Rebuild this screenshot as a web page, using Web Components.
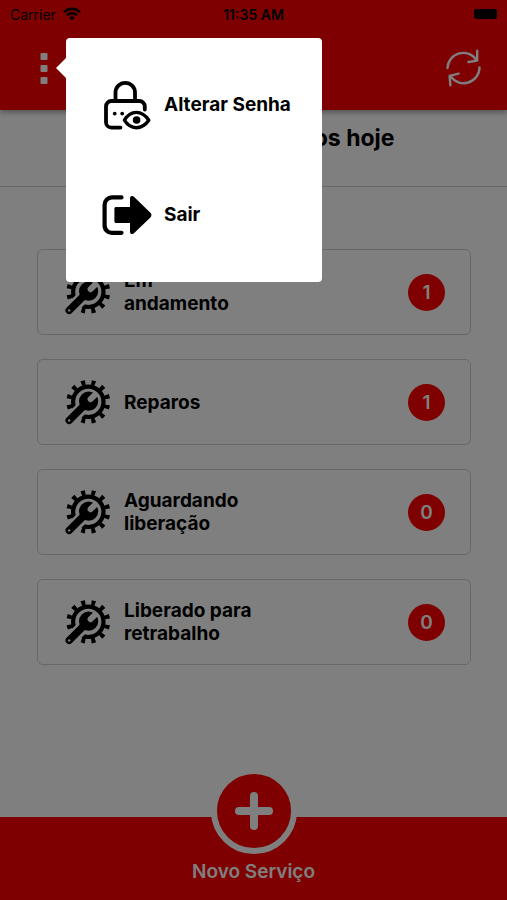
<!DOCTYPE html>
<html lang="pt-BR">
<head>
<meta charset="utf-8">
<meta name="viewport" content="width=device-width, initial-scale=1">
<title>Serviços</title>
<style>
    body{
        margin: 0;
        background: #fff;
        color: #000;
        font-family: Inter, "Liberation Sans", sans-serif;
    }
</style>
</head>
<body>
<servicos-app></servicos-app>

<script>
/** Barra de estado del dispositivo. */
class StatusBar extends HTMLElement{

    constructor(){
        super();
        this.attachShadow({mode: 'open'});
    }

    connectedCallback() {
        this.render();
    }

    /** Define y renderiza en pantalla el elemento. */
    render(){
        const style = `
            <style>
                :host{
                    display: grid;
                    grid-template-columns: 1fr auto 1fr;
                    align-items: center;
                    height: 28px;
                    padding: 0 10px;
                    font-size: 14px;
                }
                .carrier{display: flex; align-items: center; gap: 7px;}
                .time{font-weight: 600;}
                .battery{justify-self: end; width: 23px; height: 10px; border-radius: 2px; background: #000;}
                svg{display: block;}
            </style>
        `;
        const body = `
            <div class="carrier">
                <span>Carrier</span>
                <svg width="18" height="14" viewBox="0 0 18 14" fill="none" stroke="#000" stroke-width="2.6" aria-hidden="true">
                    <path d="M1 5.2C5.6 .6 12.4 .6 17 5.2"/>
                    <path d="M4 8.4C7 5.6 11 5.6 14 8.4"/>
                    <path d="M9 13.4L6.2 10.6C7.8 9.2 10.2 9.2 11.8 10.6Z" fill="#000" stroke="none"/>
                </svg>
            </div>
            <span class="time">11:35 AM</span>
            <div class="battery"></div>
        `;
        this.shadowRoot.innerHTML = style + body;
    }
}

customElements.define('status-bar', StatusBar);


/** Encabezado con el botón del menú y el de actualizar. */
class AppHeader extends HTMLElement{

    constructor(){
        super();
        this.attachShadow({mode: 'open'});
    }

    connectedCallback() {
        this.render();
        this.setEventListeners();
    }

    /** Gestiona los eventos a los que este elemento esta suscripto. */
    handleEvent(e){
        this.dispatchEvent(new CustomEvent('menu-toggle', {bubbles: true, composed: true}));
    }

    /** Define y renderiza en pantalla el elemento. */
    render(){
        const style = `
            <style>
                :host{
                    display: block;
                    background: #f00;
                    box-shadow: 0 2px 6px rgba(0, 0, 0, .4);
                }
                .toolbar{
                    display: flex;
                    align-items: center;
                    justify-content: space-between;
                    height: 82px;
                    padding: 0 24px;
                }
                button{
                    display: grid;
                    place-items: center;
                    width: 40px;
                    height: 40px;
                    padding: 0;
                    border: 0;
                    background: none;
                    cursor: pointer;
                }
            </style>
        `;
        const body = `
            <status-bar></status-bar>
            <div class="toolbar">
                <button id="menu" aria-label="Menu">
                    <svg width="8" height="34" viewBox="0 0 8 34" fill="#fff">
                        <rect x=".5" y="1" width="7" height="7" rx="1"/>
                        <rect x=".5" y="13" width="7" height="7" rx="1"/>
                        <rect x=".5" y="25" width="7" height="7" rx="1"/>
                    </svg>
                </button>
                <button aria-label="Atualizar">
                    <svg width="40" height="40" viewBox="0 0 40 40" fill="none" stroke="#fff" stroke-width="2.4" stroke-linecap="round" stroke-linejoin="round">
                        <path d="M4.5 19A15.8 15.8 0 0 1 33.6 11.2"/>
                        <path d="M34.2 1.8V11.6L25.4 13"/>
                        <path d="M36.5 18.4A15.8 15.8 0 0 1 7.6 27.2"/>
                        <path d="M7.4 36.4L6.6 26.8L15.6 24.6"/>
                    </svg>
                </button>
            </div>
        `;
        this.shadowRoot.innerHTML = style + body;
    }

    /** Suscribe el elemento a todos los eventos que debe escuchar. */
    setEventListeners(){
        this.shadowRoot.getElementById('menu').addEventListener('click', this);
    }
}

customElements.define('app-header', AppHeader);


/** Tarjeta con el estado de los servicios y su cantidad. */
class ServicoCard extends HTMLElement{

    constructor(){
        super();
        this.attachShadow({mode: 'open'});
    }

    connectedCallback() {
        this.render();
    }

    static get observedAttributes() {
        return ['total'];
    }

    attributeChangedCallback() {
        if(this.isConnected) this.render();
    }

    /** Define y renderiza en pantalla el elemento. */
    render(){
        const style = `
            <style>
                :host{display: block;}
                button{
                    display: flex;
                    align-items: center;
                    box-sizing: border-box;
                    width: 100%;
                    min-height: 86px;
                    padding: 0 25px 0 27px;
                    border: 1px solid #d0d0d0;
                    border-radius: 6px;
                    background: #fff;
                    color: #000;
                    font: 700 19px/23px Inter, "Liberation Sans", sans-serif;
                    text-align: left;
                    cursor: pointer;
                }
                svg{flex: none; margin-right: 13px;}
                .label{max-width: 136px;}
                .total{
                    flex: none;
                    width: 37px;
                    margin-left: auto;
                    border-radius: 50%;
                    background: #f00;
                    color: #fff;
                    font-weight: 600;
                    line-height: 37px;
                    text-align: center;
                }
            </style>
        `;
        const body = `
            <button>
                <svg width="46" height="46" viewBox="0 0 46 46" aria-hidden="true">
                    <mask id="corte" maskUnits="userSpaceOnUse" x="0" y="0" width="46" height="46">
                        <rect width="46" height="46" fill="#fff"/>
                        <path d="M0 46L20 26" stroke="#000" stroke-width="13"/>
                    </mask>
                    <mask id="boca" maskUnits="userSpaceOnUse" x="0" y="0" width="46" height="46">
                        <rect width="46" height="46" fill="#fff"/>
                        <path d="M25.6 20.2L36 9.8" stroke="#000" stroke-width="6" stroke-linecap="round"/>
                        <circle cx="4.2" cy="41.4" r="1.2" fill="#000"/>
                    </mask>
                    <g mask="url(#corte)" fill="none" stroke="#000">
                        <circle cx="23.3" cy="22.8" r="15.2" stroke-width="4.2"/>
                        <circle cx="23.3" cy="22.8" r="19.2" stroke-width="5.4" pathLength="120" stroke-dasharray="4 6" stroke-dashoffset="2" transform="rotate(15 23.3 22.8)"/>
                    </g>
                    <g mask="url(#boca)">
                        <circle cx="23.6" cy="22.2" r="9.6"/>
                        <path d="M4.2 41.4L20 25.6" stroke="#000" stroke-width="7.4" stroke-linecap="round"/>
                    </g>
                </svg>
                <span class="label"><slot></slot></span>
                <span class="total">${this.getAttribute('total')}</span>
            </button>
        `;
        this.shadowRoot.innerHTML = style + body;
    }
}

customElements.define('servico-card', ServicoCard);


/** Pie con el botón para crear un nuevo servicio. */
class NovoServico extends HTMLElement{

    constructor(){
        super();
        this.attachShadow({mode: 'open'});
    }

    connectedCallback() {
        this.render();
    }

    /** Define y renderiza en pantalla el elemento. */
    render(){
        const style = `
            <style>
                :host{display: flex; justify-content: center; height: 83px; background: #f00;}
                button{
                    display: flex;
                    flex-direction: column;
                    align-items: center;
                    gap: 6px;
                    margin-top: -49px;
                    padding: 0;
                    border: 0;
                    background: none;
                    color: #fff;
                    font: 600 19px/24px Inter, "Liberation Sans", sans-serif;
                    cursor: pointer;
                }
                .circle{
                    display: grid;
                    place-items: center;
                    width: 74px;
                    height: 74px;
                    border: 6px solid #fff;
                    border-radius: 50%;
                    background: #f00;
                }
            </style>
        `;
        const body = `
            <button>
                <span class="circle">
                    <svg width="40" height="40" viewBox="0 0 40 40" stroke="#fff" stroke-width="8" stroke-linecap="round" aria-hidden="true">
                        <path d="M20 5V35M5 20H35"/>
                    </svg>
                </span>
                <span>Novo Serviço</span>
            </button>
        `;
        this.shadowRoot.innerHTML = style + body;
    }
}

customElements.define('novo-servico', NovoServico);


/** Menú flotante con las opciones de la cuenta. */
class MenuPopover extends HTMLElement{

    constructor(){
        super();
        this.attachShadow({mode: 'open'});
    }

    connectedCallback() {
        this.render();
        this.setEventListeners();
    }

    /** Cierra el menú al tocar el fondo. */
    handleEvent(e){
        this.hidden = true;
    }

    /** Define y renderiza en pantalla el elemento. */
    render(){
        const style = `
            <style>
                :host{position: absolute; inset: 0; z-index: 10;}
                :host([hidden]){display: none;}
                #backdrop{position: absolute; inset: 0; background: rgba(0, 0, 0, .5);}
                nav{
                    position: absolute;
                    top: 38px;
                    left: 66px;
                    display: flex;
                    flex-direction: column;
                    gap: 50px;
                    box-sizing: border-box;
                    width: 256px;
                    padding: 37px 28px 37px 36px;
                    border-radius: 4px;
                    background: #fff;
                }
                nav::before{
                    content: "";
                    position: absolute;
                    top: 20px;
                    left: -10px;
                    border: solid transparent;
                    border-width: 10px 10px 10px 0;
                    border-right-color: #fff;
                }
                button{
                    display: flex;
                    align-items: center;
                    gap: 12px;
                    height: 60px;
                    padding: 0;
                    border: 0;
                    background: none;
                    color: #000;
                    font: 700 19px/24px Inter, "Liberation Sans", sans-serif;
                    white-space: nowrap;
                    cursor: pointer;
                }
                svg{flex: none;}
            </style>
        `;
        const body = `
            <div id="backdrop"></div>
            <nav>
                <button>
                    <svg width="50" height="50" viewBox="0 0 50 50" fill="none" stroke="#000" stroke-width="3.8" stroke-linecap="round" aria-hidden="true">
                        <path d="M13.5 20V12.6A9.7 9.7 0 0 1 33 12.6V20"/>
                        <path d="M18.5 47.6H9.4A5.4 5.4 0 0 1 4 42.2V26.4A5.4 5.4 0 0 1 9.4 21H37.4A5.4 5.4 0 0 1 42.8 26.4V29.6"/>
                        <path d="M22.4 40.2C28.6 29.8 39.8 29.8 46.8 40.2C39.8 50.2 28.6 50.2 22.4 40.2Z" stroke-width="3.4" stroke-linejoin="round"/>
                        <circle cx="34.6" cy="40" r="3.8" fill="#000" stroke="none"/>
                        <circle cx="12.7" cy="33.6" r="1.9" fill="#000" stroke="none"/>
                        <circle cx="20.2" cy="33.6" r="1.9" fill="#000" stroke="none"/>
                    </svg>
                    Alterar Senha
                </button>
                <button>
                    <svg width="50" height="50" viewBox="0 0 50 50" aria-hidden="true">
                        <path d="M19.5 7.4H10.4A7.4 7.4 0 0 0 2.6 15V35A7.4 7.4 0 0 0 10.4 42.8H19.5" fill="none" stroke="#000" stroke-width="4.2" stroke-linecap="round"/>
                        <path d="M14.4 17H28V8.6C28 5.8 30.4 5.4 32.2 7L48.4 22.8C49.8 24.2 49.8 26 48.4 27.4L32.2 43C30.4 44.6 28 44.2 28 41.4V33H14.4C13 33 12.4 32.4 12.4 31V19C12.4 17.6 13 17 14.4 17Z"/>
                    </svg>
                    Sair
                </button>
            </nav>
        `;
        this.shadowRoot.innerHTML = style + body;
    }

    /** Suscribe el elemento a todos los eventos que debe escuchar. */
    setEventListeners(){
        this.shadowRoot.getElementById('backdrop').addEventListener('click', this);
    }
}

customElements.define('menu-popover', MenuPopover);


/** Pantalla principal. */
class ServicosApp extends HTMLElement{

    constructor(){
        super();
        this.attachShadow({mode: 'open'});
    }

    connectedCallback() {
        this.render();
        this.setEventListeners();
    }

    /** Muestra u oculta el menú. */
    handleEvent(e){
        const menu = this.shadowRoot.querySelector('menu-popover');
        menu.hidden = !menu.hidden;
    }

    /** Define y renderiza en pantalla el elemento. */
    render(){
        const style = `
            <style>
                :host{
                    position: relative;
                    display: flex;
                    flex-direction: column;
                    min-height: 100vh;
                }
                h1{
                    margin: 0;
                    padding: 14px 16px 34px;
                    border-bottom: 1px solid #d0d0d0;
                    font-size: 23px;
                    font-weight: 700;
                    line-height: 28px;
                    text-align: center;
                }
                main{
                    flex: 1;
                    display: flex;
                    flex-direction: column;
                    gap: 24px;
                    padding: 62px 36px 72px 37px;
                }
            </style>
        `;
        const body = `
            <app-header></app-header>
            <h1>Serviços finalizados hoje</h1>
            <main>
                <servico-card total="1">Em andamento</servico-card>
                <servico-card total="1">Reparos</servico-card>
                <servico-card total="0">Aguardando liberação</servico-card>
                <servico-card total="0">Liberado para retrabalho</servico-card>
            </main>
            <novo-servico></novo-servico>
            <menu-popover></menu-popover>
        `;
        this.shadowRoot.innerHTML = style + body;
    }

    /** Suscribe el elemento a todos los eventos que debe escuchar. */
    setEventListeners(){
        this.addEventListener('menu-toggle', this);
    }
}

customElements.define('servicos-app', ServicosApp);
</script>
</body>
</html>
